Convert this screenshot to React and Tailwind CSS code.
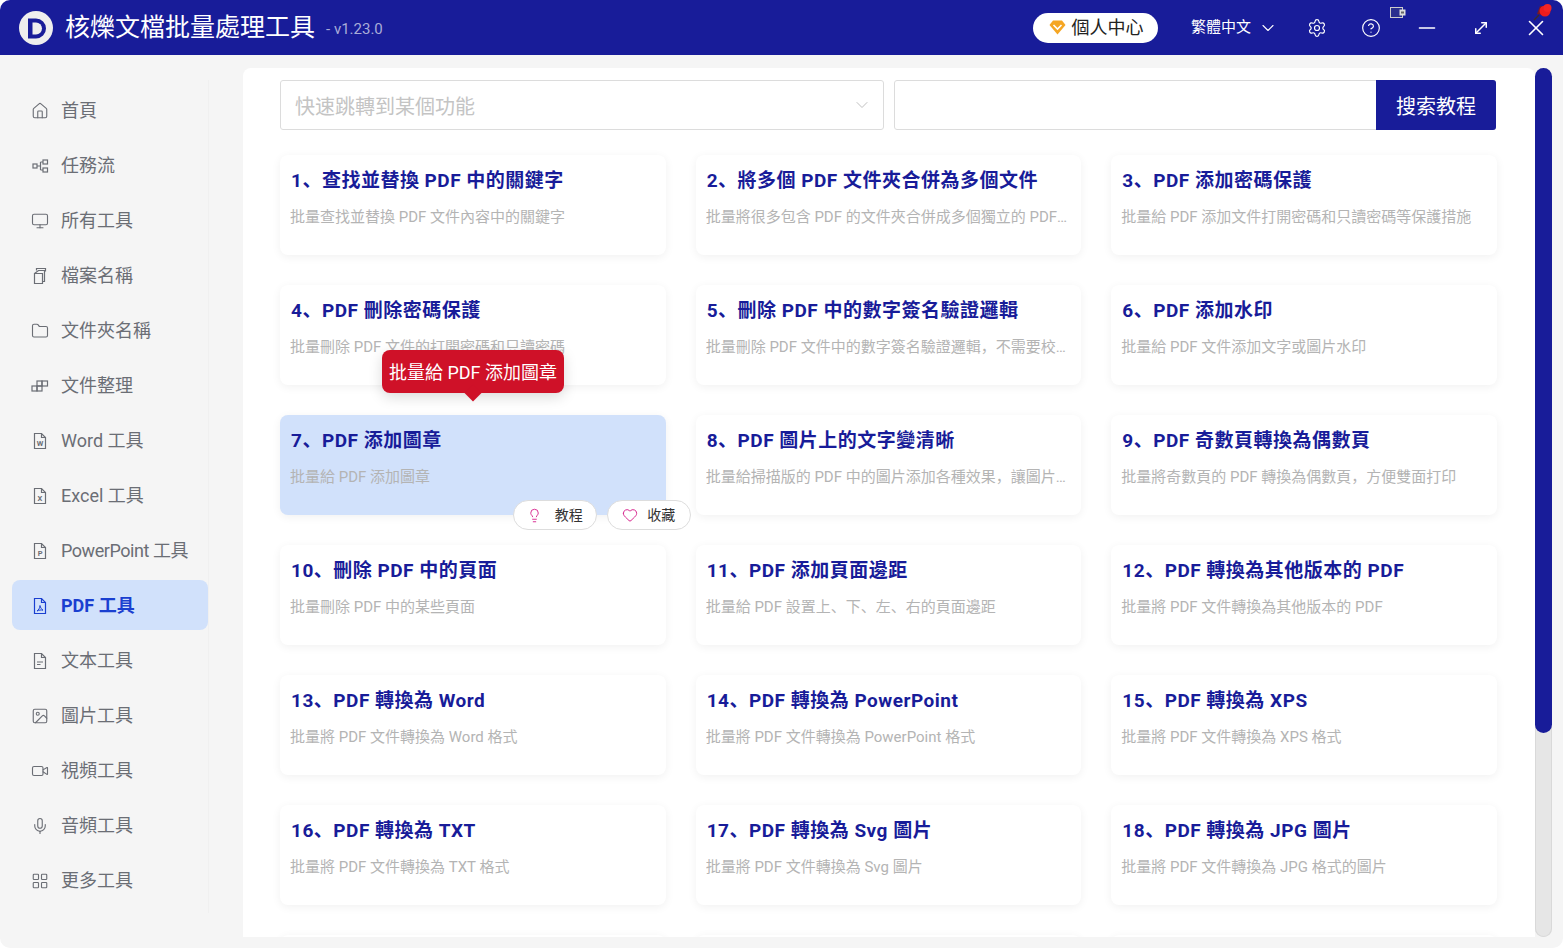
import {
  House,
  Monitor,
  Folder,
  Settings,
  CircleHelp,
  ChevronDown,
  Lightbulb,
  Heart,
  Minus,
  X,
  MoveDiagonal,
  Mic,
  Image,
  Video,
  LayoutGrid,
} from "lucide-react";

const fontStack = "font-['Roboto','Noto_Sans_CJK_SC',sans-serif]";

const DocIcon = ({ letter, lines, pdf }) => (
  <svg width="18" height="18" viewBox="0 0 18 18" fill="none" stroke="currentColor" strokeWidth="1.2">
    <path d="M3.5 1.5h7l4 4v11h-11z" />
    <path d="M10.5 1.5v4h4" />
    {letter && (
      <text x="9" y="13.5" fontSize="7.5" fontWeight="700" textAnchor="middle" fill="currentColor" stroke="none">
        {letter}
      </text>
    )}
    {lines && <path d="M6 10h6M6 12.5h3.5" />}
    {pdf && <path d="M9 8.5c0 2.5-1.5 4.5-3 5.5 2-1 4-1.300 6-.8-1.500-1-2.700-2.700-3-4.700z" strokeWidth="1" />}
  </svg>
);

const FlowIcon = () => (
  <svg width="18" height="18" viewBox="0 0 18 18" fill="none" stroke="currentColor" strokeWidth="1.2">
    <rect x="2" y="7" width="4" height="4" />
    <rect x="12" y="3" width="4.500" height="4" />
    <rect x="12" y="11" width="4.500" height="4" />
    <path d="M6 9h3.500M9.500 5v8M9.500 5H12M9.500 13H12" />
  </svg>
);

const CopyDocIcon = () => (
  <svg width="18" height="18" viewBox="0 0 18 18" fill="none" stroke="currentColor" strokeWidth="1.2">
    <path d="M3.500 6.500l4-3h6v11h-2" />
    <path d="M5.500 3.500V1.500h9v3" />
    <path d="M3.500 6.500h8v10h-8z" />
  </svg>
);

const OrganizeIcon = () => (
  <svg width="18" height="18" viewBox="0 0 18 18" fill="none" stroke="currentColor" strokeWidth="1.2">
    <rect x="1" y="9" width="5" height="5" />
    <rect x="6" y="9" width="5" height="5" />
    <rect x="6" y="4" width="5" height="5" />
    <rect x="11" y="4" width="5.500" height="5" />
  </svg>
);

const lucideProps = { size: 20, strokeWidth: 1.500 };

const navItems = [
  { label: "首頁", icon: <House {...lucideProps} /> },
  { label: "任務流", icon: <FlowIcon /> },
  { label: "所有工具", icon: <Monitor {...lucideProps} /> },
  { label: "檔案名稱", icon: <CopyDocIcon /> },
  { label: "文件夾名稱", icon: <Folder {...lucideProps} /> },
  { label: "文件整理", icon: <OrganizeIcon /> },
  { label: "Word 工具", icon: <DocIcon letter="W" /> },
  { label: "Excel 工具", icon: <DocIcon letter="X" /> },
  { label: "PowerPoint 工具", icon: <DocIcon letter="P" />, tight: true },
  { label: "PDF 工具", icon: <DocIcon pdf />, active: true },
  { label: "文本工具", icon: <DocIcon lines /> },
  { label: "圖片工具", icon: <Image {...lucideProps} /> },
  { label: "視頻工具", icon: <Video {...lucideProps} /> },
  { label: "音頻工具", icon: <Mic {...lucideProps} /> },
  { label: "更多工具", icon: <LayoutGrid {...lucideProps} /> },
];

const cards = [
  ["1、查找並替換 PDF 中的關鍵字", "批量查找並替換 PDF 文件內容中的關鍵字"],
  ["2、將多個 PDF 文件夾合併為多個文件", "批量將很多包含 PDF 的文件夾合併成多個獨立的 PDF 文件夾"],
  ["3、PDF 添加密碼保護", "批量給 PDF 添加文件打開密碼和只讀密碼等保護措施"],
  ["4、PDF 刪除密碼保護", "批量刪除 PDF 文件的打開密碼和只讀密碼"],
  ["5、刪除 PDF 中的數字簽名驗證邏輯", "批量刪除 PDF 文件中的數字簽名驗證邏輯，不需要校驗即可打開文件"],
  ["6、PDF 添加水印", "批量給 PDF 文件添加文字或圖片水印"],
  ["7、PDF 添加圖章", "批量給 PDF 添加圖章"],
  ["8、PDF 圖片上的文字變清晰", "批量給掃描版的 PDF 中的圖片添加各種效果，讓圖片上的文字變清晰"],
  ["9、PDF 奇數頁轉換為偶數頁", "批量將奇數頁的 PDF 轉換為偶數頁，方便雙面打印"],
  ["10、刪除 PDF 中的頁面", "批量刪除 PDF 中的某些頁面"],
  ["11、PDF 添加頁面邊距", "批量給 PDF 設置上、下、左、右的頁面邊距"],
  ["12、PDF 轉換為其他版本的 PDF", "批量將 PDF 文件轉換為其他版本的 PDF"],
  ["13、PDF 轉換為 Word", "批量將 PDF 文件轉換為 Word 格式"],
  ["14、PDF 轉換為 PowerPoint", "批量將 PDF 文件轉換為 PowerPoint 格式"],
  ["15、PDF 轉換為 XPS", "批量將 PDF 文件轉換為 XPS 格式"],
  ["16、PDF 轉換為 TXT", "批量將 PDF 文件轉換為 TXT 格式"],
  ["17、PDF 轉換為 Svg 圖片", "批量將 PDF 文件轉換為 Svg 圖片"],
  ["18、PDF 轉換為 JPG 圖片", "批量將 PDF 文件轉換為 JPG 格式的圖片"],
  ["", ""],
  ["", ""],
  ["", ""],
];

const Card = ({ title, desc, active }) => (
  <div
    className={`relative h-[100px] rounded-lg px-[11px] pt-[12px] shadow-[0_2px_10px_rgba(0,0,0,0.06)] ${
      active ? "bg-[#d1e1fb]" : "bg-white"
    }`}
  >
    <h3 className="h-7 truncate text-[19px] leading-7 tracking-[0.5px] font-bold text-[#181c99]">{title}</h3>
    <p className="mt-[11px] ml-[-1px] truncate text-[15px] leading-[22px] text-[#b4b4b4]">{desc}</p>
    {active && (
      <>
        <div className="absolute top-[-65px] left-[102px] z-10 flex h-[43px] w-[182px] items-center justify-center rounded-lg bg-[#cf1128] pt-[1px] text-[18px] whitespace-nowrap text-white shadow-[0_4px_14px_rgba(0,0,0,0.15)]">
          批量給 PDF 添加圖章
          <span className="absolute bottom-[-6px] left-[85px] h-3 w-3 rotate-45 bg-[#cf1128]"></span>
        </div>
        <div className="absolute right-[-25px] bottom-[-15px] z-10 flex gap-[10px]">
          <button className="flex h-[30px] w-[84px] items-center justify-center gap-[13px] rounded-full border border-[#dddddd] bg-white text-[14px] text-[#333333]">
            <Lightbulb size={15} strokeWidth={1.500} className="text-[#d8288f]" />
            教程
          </button>
          <button className="flex h-[30px] w-[84px] items-center justify-center gap-[9px] rounded-full border border-[#dddddd] bg-white text-[14px] text-[#333333]">
            <Heart size={16} strokeWidth={1.500} className="text-[#d8288f]" />
            收藏
          </button>
        </div>
      </>
    )}
  </div>
);

export default function App() {
  return (
    <div className={`h-screen overflow-hidden bg-white ${fontStack}`}>
      <div className="flex h-[948px] flex-col overflow-hidden rounded-[10px] bg-[#f5f5f5]">
        <header className="flex h-[55px] shrink-0 items-center bg-[#181c99] text-white">
          <svg width="36" height="36" viewBox="0 0 36 36" className="ml-[18px]">
            <circle cx="18" cy="18" r="17" fill="#eeeeee" />
            <path d="M10 8.500h8a10 10 0 0 1 0 20h-8z" fill="#181c99" />
            <path d="M14.500 12.500h3.500a6 6 0 0 1 0 12h-3.500z" fill="#eeeeee" />
          </svg>
          <h1 className="ml-[11px] text-[25px] leading-none whitespace-nowrap">核爍文檔批量處理工具</h1>
          <span className="ml-[11px] pt-[4px] text-[15px] text-[#a9acd8]">- v1.23.0</span>
          <div className="mr-[-1px] ml-auto flex h-[30px] w-[125px] items-center justify-center gap-[5px] rounded-full bg-white pl-[2px] text-[18px] text-[#222222]">
            <svg width="17" height="15" viewBox="0 0 17 15">
              <path d="M4 0.500h9l3.500 4.500-8 9.500-8-9.500z" fill="#f5a623" />
              <path d="M4.500 5l4 4 4-4" fill="none" stroke="#ffffff" strokeWidth="1.600" />
            </svg>
            個人中心
          </div>
          <div className="ml-[34px] flex items-center gap-[7px] text-[15px]">
            繁體中文
            <ChevronDown size={20} strokeWidth={1.300} />
          </div>
          <Settings size={20} strokeWidth={1.400} className="ml-[29px]" />
          <CircleHelp size={20} strokeWidth={1.400} className="ml-[34px]" />
          <Minus size={26} strokeWidth={1.300} className="ml-[33px]" />
          <MoveDiagonal size={18} strokeWidth={2} className="ml-[32px]" />
          <X size={26} strokeWidth={1.500} className="mr-[14px] ml-[33px]" />
        </header>

        {/* small tray icons sitting over the title bar */}
        <svg width="16" height="11" viewBox="0 0 16 11" className="absolute top-[7px] left-[1390px]">
          <rect x="0.500" y="0.500" width="12" height="10" fill="#2a2f8f" stroke="#cccccc" />
          <rect x="9.500" y="2.500" width="6" height="6" fill="#dddddd" />
          <rect x="11" y="4.500" width="3" height="2" fill="#666666" />
        </svg>
        <svg width="20" height="20" viewBox="0 0 20 20" className="absolute top-[2px] left-[1533px]">
          <path d="M1 18l5-5" stroke="#3a2a2a" strokeWidth="1.500" />
          <path d="M4 12l3-8 5 1-2 8z" fill="#7a1a22" />
          <circle cx="12" cy="9" r="5.500" fill="#ee1c1c" />
          <circle cx="14.500" cy="6" r="4" fill="#f42424" />
        </svg>

        <div className="flex min-h-0 flex-1">
          <aside className="w-[243px] shrink-0 pt-[25px]">
            <nav className="w-[209px] border-r border-[#f0f0f0] pt-[5px] pb-[3px]">
              {navItems.map((item) => (
                <div
                  key={item.label}
                  className={`mb-[5px] ml-3 flex h-[50px] w-[196px] items-center gap-[12px] rounded-lg pt-[1px] pl-[19px] text-[18px] whitespace-nowrap ${
                    item.active ? "bg-[#d1e1fb] font-bold text-[#1a3fd0]" : "text-[#6b6e75]"
                  } ${item.tight ? "tracking-[-0.45px]" : ""}`}
                >
                  <span className="flex w-[18px] justify-center">{item.icon}</span>
                  {item.label}
                </div>
              ))}
            </nav>
          </aside>

          <main className="mt-[13px] mb-[11px] flex min-w-0 flex-1">
            <div className="min-w-0 flex-1 overflow-hidden rounded-t-lg bg-white pt-3 pr-[38px] pl-[37px]">
              <div className="flex h-[50px] gap-[10px]">
                <div className="flex w-[604px] items-center justify-between rounded-[3px] border border-[#dcdcdc] pt-[4px] pr-[11px] pl-[14px] text-[20px] text-[#c4c4c4]">
                  快速跳轉到某個功能
                  <ChevronDown size={20} strokeWidth={1.200} className="mt-[-4px] text-[#c0c0c0]" />
                </div>
                <div className="mr-[1px] flex flex-1 rounded-[3px] border border-[#dcdcdc]">
                  <div className="flex-1"></div>
                  <button className="my-[-1px] mr-[-1px] w-[120px] rounded-r-[3px] bg-[#181c99] pt-[4px] text-[20px] text-white">
                    搜索教程
                  </button>
                </div>
              </div>
              <div className="mt-[25px] grid grid-cols-3 gap-x-[30px] gap-y-[30px]">
                {cards.map(([title, desc], i) => (
                  <Card key={i} title={title} desc={desc} active={i === 6} />
                ))}
              </div>
            </div>
            <div className="w-[17px] shrink-0 rounded-full bg-[#e6e6e6] shadow-[inset_0_0_0_1px_#d9d9d9]">
              <div className="h-[665px] rounded-full bg-[#181c99]"></div>
            </div>
            <div className="w-[11px] shrink-0"></div>
          </main>
        </div>
      </div>
    </div>
  );
}
